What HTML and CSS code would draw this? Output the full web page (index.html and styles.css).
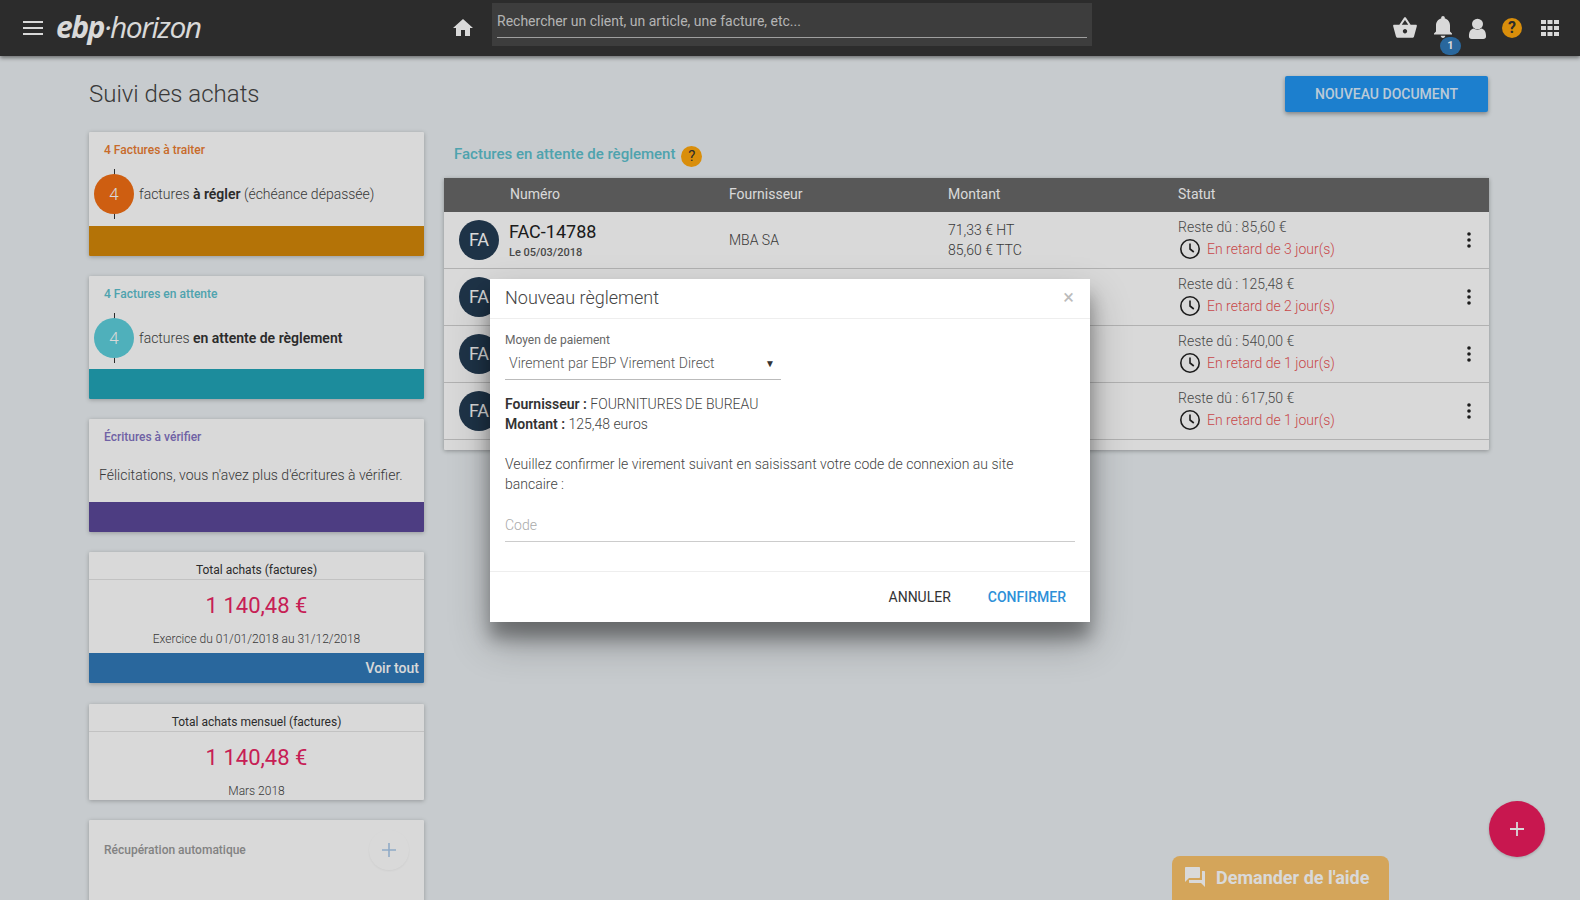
FILE: index.html
```html
<!DOCTYPE html>
<html lang="fr">
<head>
<meta charset="utf-8">
<title>Suivi des achats</title>
<link rel="stylesheet" href="styles.css">
</head>
<body>
<header class="topbar">
  <svg class="ic menu" viewBox="0 0 20 14" width="20" height="14"><path d="M0 1h20M0 7h20M0 13h20" stroke="#fff" stroke-width="2"/></svg>
  <div class="logo"><b>ebp</b>·<span>horizon</span></div>
  <svg class="ic home" viewBox="0 0 24 24" width="24" height="24"><path d="M10 20v-6h4v6h5v-8h3L12 3 2 12h3v8z" fill="#fff"/></svg>
  <div class="search"><div class="search-in">Rechercher un client, un article, une facture, etc...</div></div>
  <nav class="tools">
    <svg class="ic" viewBox="0 0 24 24" width="26" height="26"><path d="M17.2 9l-4.400-6.600c-.2-.3-.5-.4-.8-.4s-.6.1-.8.4L6.800 9H2c-.6 0-1 .4-1 1l.1.3 2.500 9.200c.2.800 1 1.500 1.900 1.500h13c.9 0 1.700-.6 1.900-1.500l2.500-9.200.1-.3c0-.6-.4-1-1-1h-4.800zM9 9l3-4.400L15 9H9zm3 8c-1.100 0-2-.9-2-2s.9-2 2-2 2 .9 2 2-.9 2-2 2z" fill="#fff"/></svg>
    <div class="bell">
      <svg class="ic" viewBox="0 0 24 24" width="24" height="24"><path d="M12 23c1.300 0 2.300-1 2.300-2.200H9.700C9.700 22 10.700 23 12 23zm7-6.500v-6c0-3.500-2-6.300-5.200-7V2.800C13.800 1.800 13 1 12 1s-1.800.8-1.800 1.800v.7C7 4.200 5 7 5 10.500v6l-2 2v1h18v-1z" fill="#fff"/></svg>
      <span class="badge">1</span>
    </div>
    <svg class="ic user" viewBox="0 0 20 24" width="19" height="22" preserveAspectRatio="none"><circle cx="10" cy="6.500" r="5.800" fill="#fff"/><path d="M1 20c0-6 2.500-8 5-8.500 2 1.600 6 1.600 8 0 2.500.5 5 2.500 5 8.500 0 2-1 3-3 3H4c-2 0-3-1-3-3z" fill="#fff"/></svg>
    <span class="help-dot big">?</span>
    <svg class="ic apps" viewBox="0 0 18 16" width="18" height="16"><path d="M0 0h5v4H0zM6.500 0h5v4h-5zM13 0h5v4h-5zM0 6h5v4H0zM6.500 6h5v4h-5zM13 6h5v4h-5zM0 12h5v4H0zM6.500 12h5v4h-5zM13 12h5v4h-5z" fill="#fff"/></svg>
  </nav>
</header>

<main class="page">
  <div class="page-head">
    <h1>Suivi des achats</h1>
    <button class="primary">NOUVEAU DOCUMENT</button>
  </div>
  <div class="columns">
    <aside class="side">
      <section class="card task first">
        <h3 class="t-orange">4 Factures à traiter</h3>
        <div class="task-row"><span class="count c-orange">4</span><p>factures <b>à régler</b> (échéance dépassée)</p></div>
        <div class="bar b-orange"></div>
      </section>
      <section class="card task">
        <h3 class="t-teal">4 Factures en attente</h3>
        <div class="task-row"><span class="count c-teal">4</span><p>factures <b>en attente de règlement</b></p></div>
        <div class="bar b-teal"></div>
      </section>
      <section class="card task short">
        <h3 class="t-purple">Écritures à vérifier</h3>
        <p class="congrats">Félicitations, vous n'avez plus d'écritures à vérifier.</p>
        <div class="bar b-purple"></div>
      </section>
      <section class="card total">
        <h4>Total achats (factures)</h4>
        <div class="amount">1 140,48 €</div>
        <div class="period">Exercice du 01/01/2018 au 31/12/2018</div>
        <div class="bar b-blue">Voir tout</div>
      </section>
      <section class="card total monthly">
        <h4>Total achats mensuel (factures)</h4>
        <div class="amount">1 140,48 €</div>
        <div class="period">Mars 2018</div>
      </section>
      <section class="card auto">
        <h3>Récupération automatique</h3>
        <span class="plus-round"><svg viewBox="0 0 14 14" width="14" height="14"><path d="M7 0v14M0 7h14" stroke="#a9c9ea" stroke-width="1.600"/></svg></span>
      </section>
    </aside>

    <section class="content">
      <h2>Factures en attente de règlement <span class="help-dot">?</span></h2>
      <div class="table">
        <div class="row head"><span></span><span>Numéro</span><span>Fournisseur</span><span>Montant</span><span>Statut</span><span></span></div>
        <div class="row">
          <span class="avatar">FA</span>
          <div class="num"><strong>FAC-14788</strong><small>Le 05/03/2018</small></div>
          <div>MBA SA</div>
          <div class="two"><div>71,33 € HT</div><div>85,60 € TTC</div></div>
          <div class="status"><div>Reste dû : 85,60 €</div><div class="late"><svg class="clock" viewBox="0 0 22 22" width="22" height="22"><circle cx="11" cy="11" r="9.200" fill="none" stroke="#222" stroke-width="1.600"/><path d="M11 5.500V11l3.800 3" fill="none" stroke="#222" stroke-width="1.600"/></svg>En retard de 3 jour(s)</div></div>
          <svg class="kebab" viewBox="0 0 4 16" width="4" height="16"><circle cx="2" cy="2" r="1.800"/><circle cx="2" cy="8" r="1.800"/><circle cx="2" cy="14" r="1.800"/></svg>
        </div>
        <div class="row">
          <span class="avatar">FA</span>
          <div></div><div></div><div></div>
          <div class="status"><div>Reste dû : 125,48 €</div><div class="late"><svg class="clock" viewBox="0 0 22 22" width="22" height="22"><circle cx="11" cy="11" r="9.200" fill="none" stroke="#222" stroke-width="1.600"/><path d="M11 5.500V11l3.800 3" fill="none" stroke="#222" stroke-width="1.600"/></svg>En retard de 2 jour(s)</div></div>
          <svg class="kebab" viewBox="0 0 4 16" width="4" height="16"><circle cx="2" cy="2" r="1.800"/><circle cx="2" cy="8" r="1.800"/><circle cx="2" cy="14" r="1.800"/></svg>
        </div>
        <div class="row">
          <span class="avatar">FA</span>
          <div></div><div></div><div></div>
          <div class="status"><div>Reste dû : 540,00 €</div><div class="late"><svg class="clock" viewBox="0 0 22 22" width="22" height="22"><circle cx="11" cy="11" r="9.200" fill="none" stroke="#222" stroke-width="1.600"/><path d="M11 5.500V11l3.800 3" fill="none" stroke="#222" stroke-width="1.600"/></svg>En retard de 1 jour(s)</div></div>
          <svg class="kebab" viewBox="0 0 4 16" width="4" height="16"><circle cx="2" cy="2" r="1.800"/><circle cx="2" cy="8" r="1.800"/><circle cx="2" cy="14" r="1.800"/></svg>
        </div>
        <div class="row">
          <span class="avatar">FA</span>
          <div></div><div></div><div></div>
          <div class="status"><div>Reste dû : 617,50 €</div><div class="late"><svg class="clock" viewBox="0 0 22 22" width="22" height="22"><circle cx="11" cy="11" r="9.200" fill="none" stroke="#222" stroke-width="1.600"/><path d="M11 5.500V11l3.800 3" fill="none" stroke="#222" stroke-width="1.600"/></svg>En retard de 1 jour(s)</div></div>
          <svg class="kebab" viewBox="0 0 4 16" width="4" height="16"><circle cx="2" cy="2" r="1.800"/><circle cx="2" cy="8" r="1.800"/><circle cx="2" cy="14" r="1.800"/></svg>
        </div>
        <div class="table-foot"></div>
      </div>
    </section>
  </div>
</main>

<button class="fab"><svg viewBox="0 0 14 14" width="14" height="14"><path d="M7 0v14M0 7h14" stroke="#fff" stroke-width="1.800"/></svg></button>
<div class="helpdesk">
  <svg viewBox="0 0 24 24" width="24" height="24"><path d="M21 6h-2v9H6v2c0 .6.400 1 1 1h11l4 4V7c0-.6-.4-1-1-1zm-4 6V3c0-.6-.4-1-1-1H3c-.6 0-1 .4-1 1v14l4-4h10c.6 0 1-.4 1-1z" fill="#fff"/></svg>
  <span>Demander de l'aide</span>
</div>

<div class="backdrop"></div>

<div class="modal">
  <div class="modal-head"><h5>Nouveau règlement</h5><span class="close">×</span></div>
  <div class="modal-body">
    <label>Moyen de paiement</label>
    <div class="select"><span>Virement par EBP Virement Direct</span><i>▼</i></div>
    <p class="info"><b>Fournisseur :</b> FOURNITURES DE BUREAU<br><b>Montant :</b> 125,48 euros</p>
    <p class="confirm">Veuillez confirmer le virement suivant en saisissant votre code de connexion au site bancaire :</p>
    <div class="code">Code</div>
  </div>
  <div class="modal-foot"><button class="txt">ANNULER</button><button class="txt ok">CONFIRMER</button></div>
</div>
</body>
</html>
```
FILE: styles.css
```css
* { box-sizing: border-box; }
html, body { margin: 0; height: 100%; overflow: hidden; }
body { background: #eaeff2; font-family: Roboto, "Liberation Sans", sans-serif; font-size: 14px; color: #444; position: relative; }
h1, h2, h3, h4, h5, p { margin: 0; font-weight: normal; }
button { font-family: inherit; border: 0; background: none; cursor: pointer; }

.topbar { height: 56px; background: #343434; display: flex; align-items: center; box-shadow: 0 2px 4px rgba(0,0,0,.45); position: relative; z-index: 2; padding-left: 23px; }
.ic { display: block; flex: none; }
.logo { margin-left: 13px; width: 150px; font-family: "Open Sans", sans-serif; font-style: italic; font-size: 30px; letter-spacing: -1.500px; color: #fff; white-space: nowrap; line-height: 56px; margin-top: -2px; }
.logo b { font-weight: 700; }
.logo span { font-weight: 500; }
.home { margin-left: 245px; }
.search { margin-left: 17px; width: 600px; height: 43px; margin-top: -7px; background: #484848; padding: 0 5px 0 5px; }
.search-in { height: 35px; line-height: 36px; border-bottom: 1px solid #bbb; color: #d4d4d4; font-weight: 400; }
.tools { margin-left: auto; display: flex; align-items: center; padding-right: 21px; }
.tools > svg:first-child { margin-right: 12px; }
.bell { position: relative; width: 26px; margin-right: 12px; }
.bell .ic { margin-left: 1px; margin-top: -2px; }
.badge { position: absolute; left: 10px; top: 20px; width: 21px; height: 18px; border-radius: 10px; background: #317ab9; color: #fff; font-size: 11px; font-weight: 700; text-align: center; line-height: 18px; }
.user { margin-right: 15px; margin-top: 1px; }
.help-dot { display: inline-block; width: 21px; height: 21px; border-radius: 50%; background: #ffa70d; color: #333; font-size: 15px; text-align: center; line-height: 21px; vertical-align: -2px; font-weight: 400; margin-left: 2px; }
.help-dot.big { width: 20px; height: 20px; line-height: 20px; font-weight: 700; font-size: 16px; margin: 0 19px 0 0; }

.page { padding: 20px 91px 0 89px; }
.page-head { display: flex; justify-content: space-between; align-items: center; height: 36px; padding-right: 1px; }
h1 { font-size: 24px; font-weight: 300; color: #444; }
.primary { width: 203px; height: 36px; background: #2196f3; color: rgba(255,255,255,.85); font-size: 14px; font-weight: 500; border-radius: 2px; box-shadow: 0 2px 4px rgba(0,0,0,.35); padding: 0; }

.columns { display: grid; grid-template-columns: 335px 1045px; column-gap: 20px; margin-top: 20px; }
.side { display: flex; flex-direction: column; gap: 20px; }
.card { background: #fff; box-shadow: 0 1px 4px rgba(0,0,0,.25); border-radius: 1px; overflow: hidden; }
.task h3 { font-size: 12px; font-weight: 500; padding: 11px 15px 0; line-height: 14px; height: 26px; }
.t-orange { color: #ec7d32; }
.t-teal { color: #5cc0cd; }
.t-purple { color: #8373c2; }
.task-row { height: 67px; display: flex; align-items: center; padding: 4px 0 0 5px; position: relative; z-index: 0; }
.first .task-row { height: 68px; }
.task-row p { margin-left: 5px; font-weight: 300; color: #444; }
.task-row b { font-weight: 600; color: #333; }
.count { width: 40px; height: 40px; border-radius: 50%; color: #fff; text-align: center; line-height: 40px; font-size: 17px; font-weight: 300; position: relative; flex: none; }
.count::before { content: ""; position: absolute; left: 20px; top: -5px; width: 1px; height: 50px; background: #333; z-index: -1; }
.c-orange { background: #f36f15; }
.c-teal { background: #5dcfdc; }
.bar { height: 30px; }
.b-orange { background: #d48809; }
.b-teal { background: #22a5b8; }
.b-purple { background: #5b4899; }
.b-blue { background: #317ab9; color: #fff; font-weight: 500; text-align: right; line-height: 30px; padding-right: 5px; }
.task.short .congrats { height: 57px; padding: 20px 0 0 10px; font-weight: 300; line-height: 20px; color: #444; }
.total { text-align: center; }
.total h4 { font-size: 12px; color: #333; height: 28px; line-height: 36px; border-bottom: 1px solid #e4e4e4; font-weight: 400; }
.monthly { margin-top: 1px; }
.amount { font-size: 22px; color: #ea2564; height: 52px; line-height: 52px; }
.period { font-size: 12px; font-weight: 300; color: #444; height: 21px; line-height: 15px; }
.monthly .period { height: 16px; line-height: 14px; }
.auto { height: 120px; position: relative; padding: 22px 15px; }
.auto h3 { font-size: 12px; font-weight: 500; color: #999; line-height: 16px; }
.plus-round { position: absolute; left: 280px; top: 10px; width: 40px; height: 40px; border-radius: 50%; background: #fff; box-shadow: 0 1px 2px rgba(0,0,0,.05); display: flex; align-items: center; justify-content: center; }

.content h2 { font-size: 15px; font-weight: 500; color: #5cc0cd; height: 46px; padding: 12px 0 0 10px; line-height: 20px; }
.table { background: #fff; box-shadow: 0 1px 4px rgba(0,0,0,.3); border-radius: 1px; }
.row { display: grid; grid-template-columns: 66px 219px 219px 230px 1fr 40px; height: 57px; padding-bottom: 1px; align-items: center; border-bottom: 1px solid #d0d0d0; font-weight: 300; color: #444; }
.row.head { height: 34px; padding-bottom: 2px; background: #686868; color: #fff; border: 0; font-weight: 400; font-size: 14px; }
.avatar { width: 40px; height: 40px; border-radius: 50%; background: #243c54; color: #fff; font-size: 18px; font-weight: 400; text-align: center; line-height: 40px; margin-left: 15px; }
.num { padding-top: 3px; margin-left: -1px; }
.num strong { display: block; font-size: 18px; font-weight: 400; color: #222; line-height: 22px; }
.num small { display: block; font-size: 11px; font-weight: 500; color: #555; line-height: 16px; margin-top: 2px; }
.two div { line-height: 20px; }
.status { color: #555; padding-bottom: 2px; font-weight: 300; }
.status > div:first-child { line-height: 20px; margin-bottom: 1px; }
.late { display: flex; align-items: center; color: #ec5557; height: 22px; font-weight: 300; }
.clock { margin: 0 6px 0 1px; flex: none; }
.kebab { fill: #222; margin-left: 18px; }
.table-foot { height: 10px; }

.fab { position: absolute; left: 1489px; top: 801px; width: 56px; height: 56px; border-radius: 50%; background: #eb1c5d; box-shadow: 0 1px 3px rgba(0,0,0,.2); display: flex; align-items: center; justify-content: center; padding: 0; }
.helpdesk { position: absolute; left: 1172px; top: 856px; width: 217px; height: 44px; background: #fac26a; border-radius: 8px 8px 0 0; display: flex; align-items: center; gap: 9px; padding: 0 0 2px 11px; color: #fff; font-size: 18px; font-weight: 700; }

.backdrop { position: absolute; inset: 0; background: rgba(0,0,0,.15); z-index: 5; }
.modal { position: absolute; left: 490px; top: 279px; width: 600px; height: 343px; background: #fff; z-index: 6; box-shadow: 0 19px 38px rgba(0,0,0,.3), 0 16px 16px rgba(0,0,0,.3); display: flex; flex-direction: column; }
.modal-head { height: 40px; border-bottom: 1px solid #eee; display: flex; justify-content: space-between; align-items: center; padding: 0 16px 0 15px; }
.modal-head h5 { font-size: 18px; font-weight: 300; color: #444; margin-top: -3px; }
.close { color: #bbb; font-size: 20px; line-height: 20px; margin-top: -3px; }
.modal-body { flex: 1; padding: 13px 15px 0; font-weight: 300; color: #444; }
.modal-body label { display: block; font-size: 12px; font-weight: 400; color: #666; line-height: 16px; }
.select { width: 276px; height: 32px; padding: 0 6px 1px 4px; border-bottom: 1px solid #bbb; display: flex; justify-content: space-between; align-items: center; color: #555; }
.select i { font-style: normal; font-size: 10px; color: #333; font-weight: 400; }
.info { line-height: 20px; margin-top: 14px; font-weight: 300; }
.info b { font-weight: 600; color: #333; }
.confirm { line-height: 20px; margin-top: 20px; font-weight: 300; max-width: 530px; }
.code { margin-top: 15px; height: 33px; line-height: 33px; border-bottom: 1px solid #ccc; color: #aaa; }
.modal-foot { height: 51px; border-top: 1px solid #eee; display: flex; justify-content: flex-end; align-items: center; padding-right: 24px; gap: 37px; }
.txt { font-size: 14px; color: #333; padding: 0; }
.ok { color: #2e90d8; font-weight: 500; }
```
